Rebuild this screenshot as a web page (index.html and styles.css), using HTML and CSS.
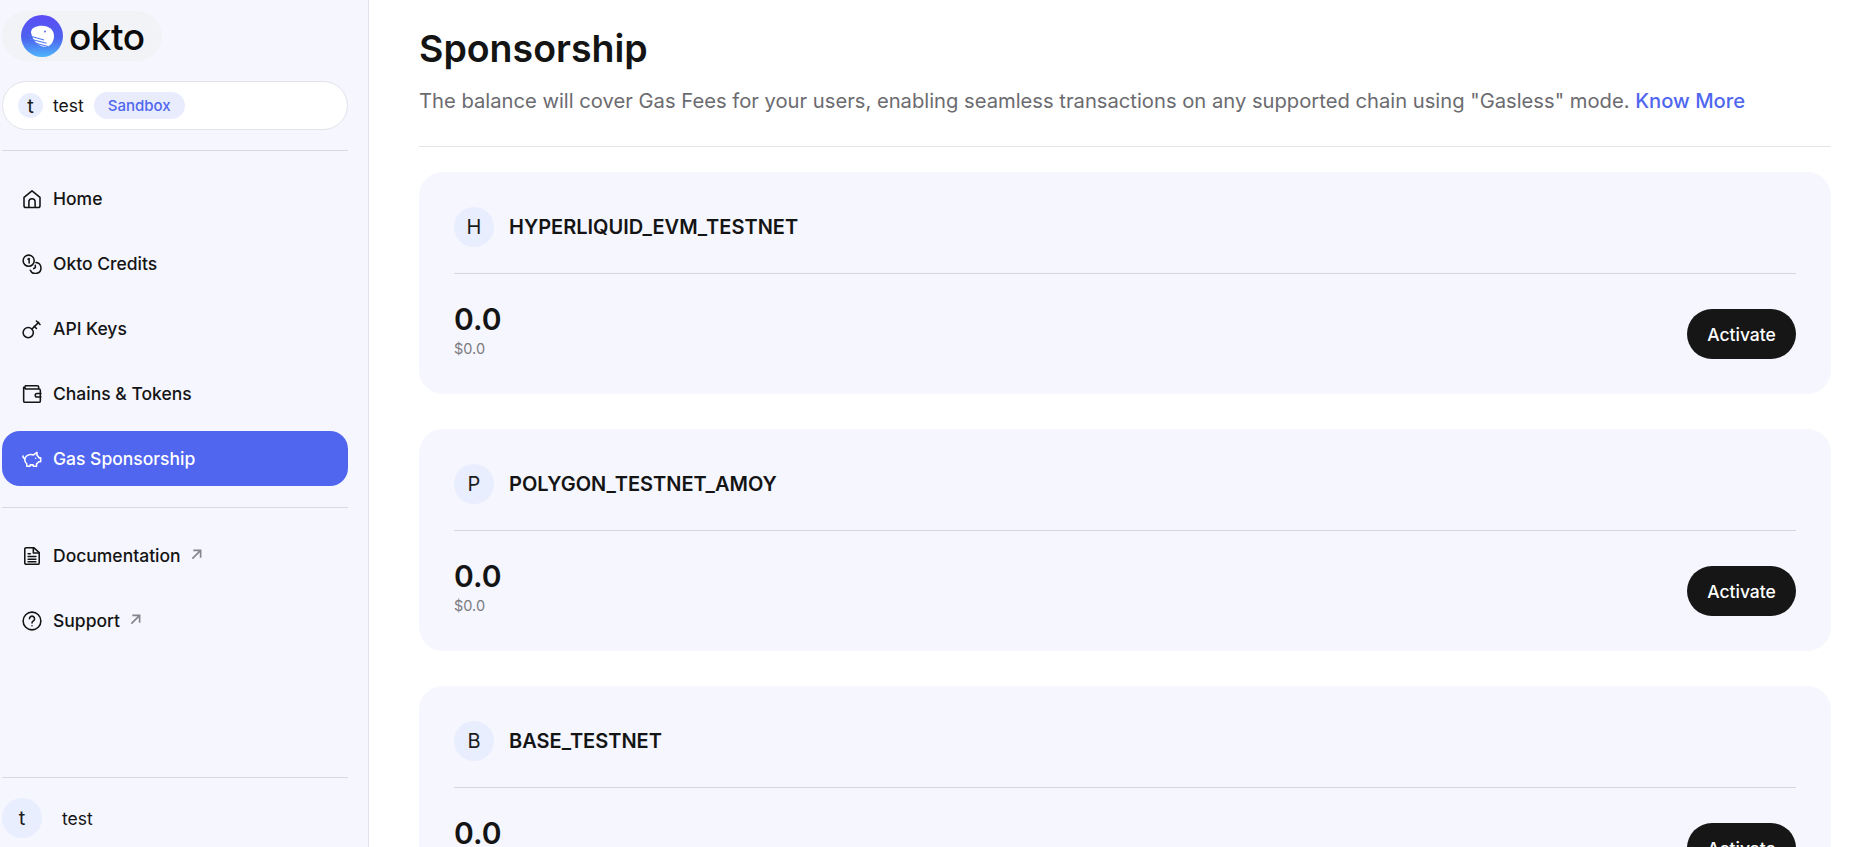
FILE: index.html
```html
<!DOCTYPE html>
<html lang="en">
<head>
    <meta charset="UTF-8">
    <meta name="viewport" content="width=device-width, initial-scale=1.0">
    <title>Okto - Sponsorship</title>
    <link rel="stylesheet" href="styles.css">
</head>
<body>
    <div class="app">
        <aside class="sidebar">
            <div class="logo">
                <svg class="logo-mark" viewBox="0 0 42 42">
                    <defs>
                        <linearGradient id="logoFill" x1="0" y1="0" x2="0" y2="1">
                            <stop offset="0" stop-color="#5b4cf5"/>
                            <stop offset="0.55" stop-color="#4d62ef"/>
                            <stop offset="1" stop-color="#4fb6fb"/>
                        </linearGradient>
                    </defs>
                    <circle cx="21" cy="21" r="21" fill="url(#logoFill)"/>
                    <path d="M10 17.500C10 13 15 10.800 21 10.800C28 10.800 33 15 33 21C33 26.500 30 30.500 26 31.800C20 32.500 12 28 10 17.500Z" fill="#fff"/>
                    <path d="M7 20.500 23 25M8 23.800 25.500 28.300M10 27 27 31.500" fill="none" stroke="#4d78f2" stroke-width="1.100"/>
                    <circle cx="24" cy="16.500" r="0.900" fill="#4d60ef"/>
                </svg>
                <span class="logo-text">okto</span>
            </div>

            <div class="switcher">
                <span class="avatar avatar-small">t</span>
                <span class="switcher-name">test</span>
                <span class="badge">Sandbox</span>
            </div>

            <hr class="rule rule-top">

            <nav class="nav">
                <a class="nav-item">
                    <svg class="icon" viewBox="0 0 18 18"><path d="M1.800 7.600 9 1.600l7.200 6V15a1.600 1.600 0 0 1-1.600 1.600H3.400A1.600 1.600 0 0 1 1.800 15Z"/><path d="M6.200 16.500v-5a2.800 2.800 0 0 1 5.600 0v5"/></svg>
                    Home
                </a>
                <a class="nav-item">
                    <svg class="icon" viewBox="0 0 18 18"><circle cx="6" cy="6" r="5"/><path d="M5.400 4.600 6.400 4v4"/><path d="M12.500 7.600a5 5 0 1 1-5 7"/><path d="M12 10.200v2l-1.500 1"/></svg>
                    Okto Credits
                </a>
                <a class="nav-item">
                    <svg class="icon" viewBox="0 0 18 18"><circle cx="5.600" cy="12.200" r="4.600"/><path d="m9 9 6-6"/><path d="m13 1.800 3.200 3.200"/><path d="m11 6.500 2 2"/></svg>
                    API Keys
                </a>
                <a class="nav-item">
                    <svg class="icon" viewBox="0 0 18 18"><path d="M15 4.500V2.800A1.300 1.300 0 0 0 13.700 1.500H3.300a2 2 0 0 0 0 3h11.900a1.300 1.300 0 0 1 1.300 1.300v9.400a1.300 1.300 0 0 1-1.300 1.300H2.800a1.300 1.300 0 0 1-1.300-1.300V3"/><path d="M17 8.500h-3.500a1.600 1.600 0 0 0 0 3.200H17"/></svg>
                    Chains &amp; Tokens
                </a>
                <a class="nav-item nav-item-active">
                    <svg class="icon" viewBox="0 0 18 18"><path d="M13.500 3v2.800c.9.600 1.500 1.300 1.900 2.200h1.400v3.400h-1.700c-.5.800-1.200 1.400-2 1.900V15.500h-2.800l-.3-1.200H7.400l-.3 1.200H4.300v-2.200C3 12.400 2.500 11 2.500 9.500 2.500 7 5 5 8 5c.9 0 1.600.100 2.300.300Z"/><path d="M2.500 8.500C1.300 8.300.8 7.500 1 6.300"/><path d="M12.300 8.300v.1"/></svg>
                    Gas Sponsorship
                </a>
            </nav>

            <hr class="rule rule-middle">

            <nav class="nav">
                <a class="nav-item">
                    <svg class="icon" viewBox="0 0 18 18"><path d="M2.500 2.800A1.300 1.300 0 0 1 3.800 1.500h6.700l5 4.500v9.200a1.300 1.300 0 0 1-1.300 1.300H3.800a1.300 1.300 0 0 1-1.300-1.300Z"/><path d="M10.200 1.500v4.800h5.300"/><path d="M5.500 9.500h7M5.500 11.900h7M5.500 14.200h7M5.500 7h2"/></svg>
                    Documentation
                    <svg class="arrow" viewBox="0 0 12 12"><path d="M1.500 10.500 10.500 1.500M2.500 1.500h8v8"/></svg>
                </a>
                <a class="nav-item">
                    <svg class="icon" viewBox="0 0 18 18"><circle cx="9" cy="9" r="8"/><path d="M6.700 6.900a2.300 2.300 0 1 1 3.500 2c-.8.500-1.200 1-1.200 1.800"/><path d="M9 13.200v.1"/></svg>
                    Support
                    <svg class="arrow" viewBox="0 0 12 12"><path d="M1.500 10.500 10.500 1.500M2.500 1.500h8v8"/></svg>
                </a>
            </nav>

            <div class="sidebar-footer">
                <hr class="rule">
                <div class="profile">
                    <span class="avatar">t</span>
                    <span class="profile-name">test</span>
                </div>
            </div>
        </aside>

        <main class="content">
            <header class="page-head">
                <h1>Sponsorship</h1>
                <p>The balance will cover Gas Fees for your users, enabling seamless transactions on any supported chain using "Gasless" mode. <a class="link">Know More</a></p>
            </header>

            <section class="card">
                <div class="card-head">
                    <span class="avatar">H</span>
                    <h2>HYPERLIQUID_EVM_TESTNET</h2>
                </div>
                <div class="card-body">
                    <div>
                        <div class="amount">0.0</div>
                        <div class="amount-usd">$0.0</div>
                    </div>
                    <button class="activate">Activate</button>
                </div>
            </section>

            <section class="card">
                <div class="card-head">
                    <span class="avatar">P</span>
                    <h2>POLYGON_TESTNET_AMOY</h2>
                </div>
                <div class="card-body">
                    <div>
                        <div class="amount">0.0</div>
                        <div class="amount-usd">$0.0</div>
                    </div>
                    <button class="activate">Activate</button>
                </div>
            </section>

            <section class="card">
                <div class="card-head">
                    <span class="avatar">B</span>
                    <h2>BASE_TESTNET</h2>
                </div>
                <div class="card-body">
                    <div>
                        <div class="amount">0.0</div>
                        <div class="amount-usd">$0.0</div>
                    </div>
                    <button class="activate">Activate</button>
                </div>
            </section>
        </main>
    </div>
</body>
</html>
```

FILE: styles.css
```css
* {
    box-sizing: border-box;
}
html, body {
    height: 100%;
}
body {
    margin: 0;
    overflow: hidden;
    font-family: Inter, "Liberation Sans", sans-serif;
    color: #141414;
    background: #fff;
}
.app {
    display: flex;
    height: 847px;
}

/* sidebar */
.sidebar {
    width: 369px;
    flex-shrink: 0;
    display: flex;
    flex-direction: column;
    padding: 11px 20px 9px 2px;
    background: #f5f6fe;
    border-right: 1px solid #e2e3ea;
}
.logo {
    display: flex;
    align-items: center;
    gap: 6px;
    width: 160px;
    height: 50px;
    padding-left: 19px;
    border-radius: 25px;
    background: #f2f3f7;
}
.logo-mark {
    width: 42px;
    height: 42px;
}
.logo-text {
    font-size: 37px;
    font-weight: 500;
    line-height: 1;
    color: #0a0a0a;
    letter-spacing: -0.500px;
}
.switcher {
    display: flex;
    align-items: center;
    height: 49px;
    margin-top: 20px;
    padding-left: 15px;
    background: #fff;
    border: 1px solid #e2e3ea;
    border-radius: 25px;
}
.switcher-name {
    margin-left: 10px;
    font-size: 17.500px;
}
.badge {
    margin-left: 10px;
    padding: 4px 14px;
    font-size: 15px;
    font-weight: 500;
    line-height: 19px;
    color: #4f67ef;
    background: #e9ecfd;
    border-radius: 14px;
}
.avatar {
    display: flex;
    align-items: center;
    justify-content: center;
    flex-shrink: 0;
    width: 40px;
    height: 40px;
    font-size: 20px;
    color: #1c1c1c;
    background: #e9eefe;
    border-radius: 50%;
}
.avatar-small {
    width: 25px;
    height: 25px;
}
.rule {
    width: 100%;
    height: 1px;
    margin: 0;
    border: 0;
    background: #d8d9e4;
}
.rule-top {
    margin: 20px 0;
}
.rule-middle {
    margin: 21px 0 20px;
}
.nav {
    display: flex;
    flex-direction: column;
    gap: 10px;
}
.nav-item {
    display: flex;
    align-items: center;
    height: 55px;
    padding-left: 20px;
    font-size: 17.500px;
    font-weight: 500;
    border-radius: 18px;
    color: #141414;
}
.nav-item-active {
    background: #5166ef;
    color: #fff;
}
.icon {
    width: 20px;
    height: 20px;
    margin-right: 11px;
    fill: none;
    stroke: currentColor;
    stroke-width: 1.400;
    stroke-linecap: round;
    stroke-linejoin: round;
}
.arrow {
    width: 11px;
    height: 11px;
    margin-left: 10px;
    margin-top: -2px;
    fill: none;
    stroke: #85858c;
    stroke-width: 1.800;
}
.sidebar-footer {
    margin-top: auto;
}
.profile {
    display: flex;
    align-items: center;
    gap: 20px;
    margin-top: 20px;
    font-size: 17.500px;
}

/* main column */
.content {
    flex: 1;
    min-width: 0;
    overflow: hidden;
    padding: 0 35px 0 50px;
}
.page-head {
    padding: 27px 0 31px;
    border-bottom: 1px solid #e4e4e7;
    margin-bottom: 25px;
}
.page-head h1 {
    margin: 0;
    font-size: 37.500px;
    font-weight: 600;
    line-height: 44px;
    color: #141414;
}
.page-head p {
    margin: 16px 0 0;
    font-size: 20.200px;
    line-height: 28px;
    color: #6b6b70;
}
.link {
    color: #4f67ef;
    font-weight: 500;
}
.card {
    margin-bottom: 35px;
    padding: 35px;
    background: #f5f6fe;
    border-radius: 24px;
}
.card-head {
    display: flex;
    align-items: center;
    gap: 15px;
    padding-bottom: 26px;
    border-bottom: 1px solid #d6d6e2;
}
.card-head h2 {
    margin: 0;
    font-size: 20px;
    font-weight: 600;
    color: #141414;
}
.card-body {
    display: flex;
    align-items: flex-end;
    justify-content: space-between;
    padding-top: 27px;
}
.amount {
    font-size: 30px;
    font-weight: 600;
    line-height: 36px;
}
.amount-usd {
    margin-top: 2px;
    font-size: 14.500px;
    line-height: 20px;
    color: #7b7b80;
}
.activate {
    width: 109px;
    height: 50px;
    padding: 0;
    font-family: inherit;
    font-size: 17.500px;
    font-weight: 500;
    color: #fff;
    background: #161616;
    border: 0;
    border-radius: 25px;
}
```
